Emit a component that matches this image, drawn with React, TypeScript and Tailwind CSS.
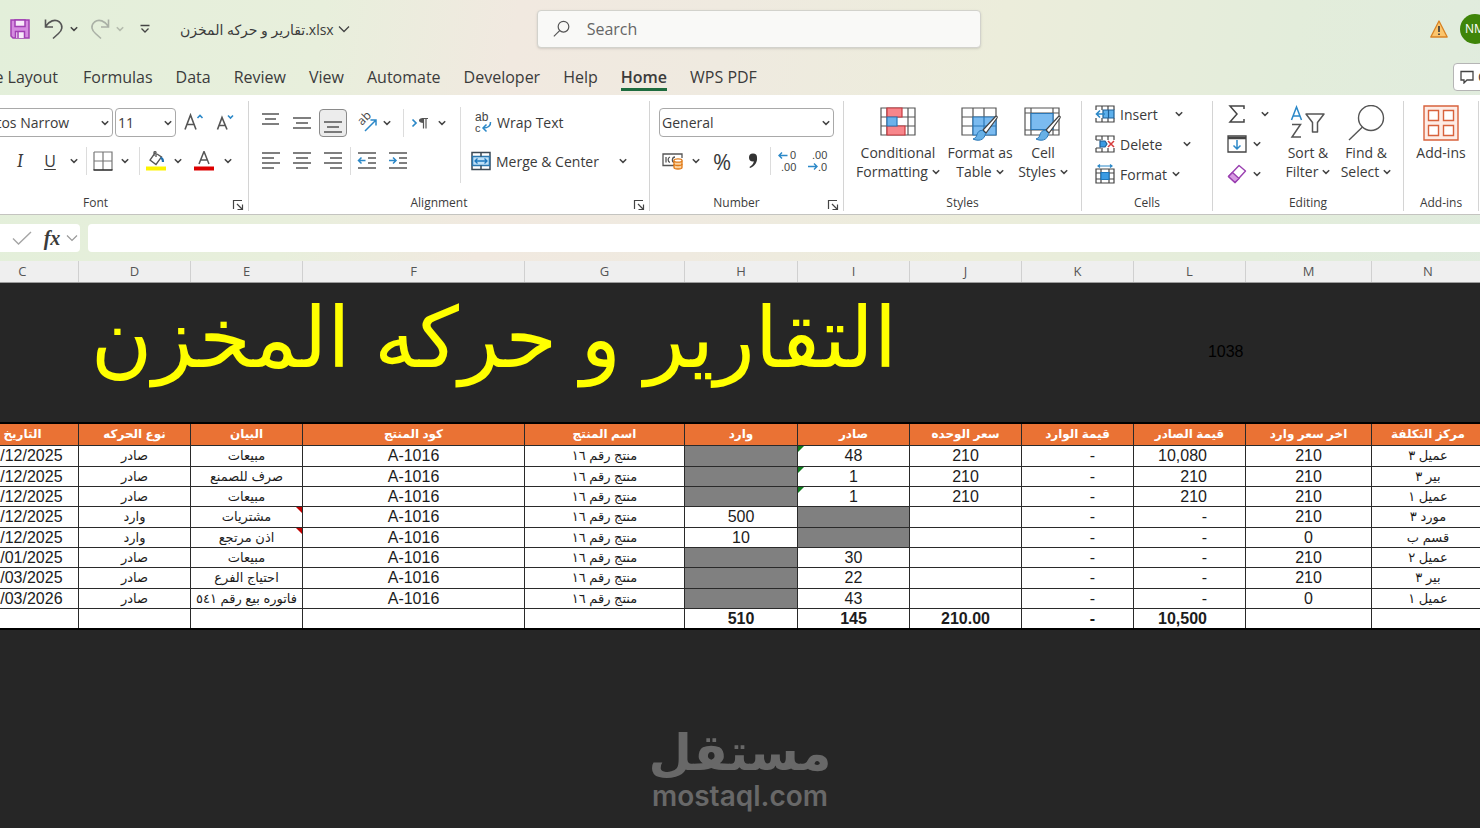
import type { ReactNode } from "react";
import clsx from "clsx";

const tabs = ["Formulas", "Data", "Review", "View", "Automate", "Developer", "Help", "Home", "WPS PDF"];

const letters = ["C", "D", "E", "F", "G", "H", "I", "J", "K", "L", "M", "N"];

const headers = [
  "التاريخ",
  "نوع الحركه",
  "البيان",
  "كود المنتج",
  "اسم المنتج",
  "وارد",
  "صادر",
  "سعر الوحده",
  "قيمة الوارد",
  "قيمة الصادر",
  "اخر سعر وارد",
  "مركز التكلفة",
];

type Row = {
  date: string;
  type: string;
  note: string;
  qtyIn?: string;
  qtyOut?: string;
  price?: string;
  valueOut: string;
  last: string;
  center: string;
  comment?: boolean;
  warn?: boolean;
};

const rows: Row[] = [
  { date: "07/12/2025", type: "صادر", note: "مبيعات", qtyOut: "48", price: "210", valueOut: "10,080", last: "210", center: "عميل ٣", warn: true },
  { date: "08/12/2025", type: "صادر", note: "صرف للصمنع", qtyOut: "1", price: "210", valueOut: "210", last: "210", center: "بير ٣", warn: true },
  { date: "08/12/2025", type: "صادر", note: "مبيعات", qtyOut: "1", price: "210", valueOut: "210", last: "210", center: "عميل ١", warn: true },
  { date: "07/12/2025", type: "وارد", note: "مشتريات", qtyIn: "500", valueOut: "-", last: "210", center: "مورد ٣", comment: true },
  { date: "08/12/2025", type: "وارد", note: "اذن مرتجع", qtyIn: "10", valueOut: "-", last: "0", center: "قسم ب", comment: true },
  { date: "07/01/2025", type: "صادر", note: "مبيعات", qtyOut: "30", valueOut: "-", last: "210", center: "عميل ٢" },
  { date: "08/03/2025", type: "صادر", note: "احتياج الفرع", qtyOut: "22", valueOut: "-", last: "210", center: "بير ٣" },
  { date: "07/03/2026", type: "صادر", note: "فاتوره بيع رقم ٥٤١", qtyOut: "43", valueOut: "-", last: "0", center: "عميل ١" },
];

function Chevron({ className }: { className?: string }) {
  return (
    <svg viewBox="0 0 8 6" className={clsx("h-1.5 w-2 shrink-0", className)} fill="none" stroke="#444" strokeWidth="1.5">
      <path d="M0.8 1.2 4 4.4 7.2 1.2" />
    </svg>
  );
}

function ChevronButton({ label, className }: { label: string; className?: string }) {
  return (
    <button aria-label={label} className={clsx("flex h-7 w-3 shrink-0 items-center justify-center", className)}>
      <Chevron />
    </button>
  );
}

function IconButton({ label, className, children }: { label: string; className?: string; children: ReactNode }) {
  return (
    <button aria-label={label} className={clsx("flex h-7 shrink-0 items-center justify-center", className)}>
      {children}
    </button>
  );
}

function Divider({ className }: { className?: string }) {
  return <div className={clsx("w-px shrink-0 bg-[#dcdcdc]", className)} />;
}

function Group({ title, className, launcher, children }: { title: string; className: string; launcher?: boolean; children: ReactNode }) {
  return (
    <section className={clsx("relative flex shrink-0 flex-col border-r border-[#d4d4d4]", className)}>
      <div className="flex h-[94px] w-full">{children}</div>
      <div className="flex h-4 items-center justify-center text-[12px] leading-4">{title}</div>
      {launcher && (
        <button aria-label={title + " settings"} className="absolute right-1 bottom-0 h-3 w-3">
          <svg viewBox="0 0 12 12" fill="none" stroke="#444" strokeWidth="1.2">
            <path d="M1.5 10V1.5H10M5 5l5 5M10.5 5.5v5h-5" />
          </svg>
        </button>
      )}
    </section>
  );
}

// text lines, each given as [x1, x2]
function Lines({ items, top = 2 }: { items: [number, number][]; top?: number }) {
  return (
    <svg viewBox="0 0 20 20" className="h-5 w-5" stroke="#555" strokeWidth="1.5">
      {items.map(([a, b], i) => (
        <path key={i} d={`M${a} ${top + i * 5}H${b}`} />
      ))}
    </svg>
  );
}

function Indent({ right }: { right?: boolean }) {
  return (
    <svg viewBox="0 0 20 20" className="h-5 w-5" fill="none" stroke="#555" strokeWidth="1.5">
      <path d="M1 2H19M11 7H19M11 12H19M1 17H19" />
      <path d={right ? "M1 9.5H8M5 6.5l3 3-3 3" : "M8.5 9.5H1.5M4.5 6.5l-3 3 3 3"} stroke="#2b88c8" />
    </svg>
  );
}

function BigButton({ className, lines, menu, children }: { className: string; lines: string[]; menu?: boolean; children: ReactNode }) {
  return (
    <button className={clsx("flex shrink-0 flex-col items-center leading-[19px]", className)}>
      <span className="flex h-[38px] items-start">{children}</span>
      {lines.map((line, i) => (
        <span key={line} className="flex items-center gap-1 whitespace-nowrap">
          {line}
          {menu && i === lines.length - 1 && <Chevron />}
        </span>
      ))}
    </button>
  );
}

function Brush() {
  return (
    <g>
      <path d="M34.5 9.5 22 23l3 3L36 11c.8-1.200-.5-2.500-1.500-1.500Z" fill="#fff" stroke="#444" strokeWidth="1.2" />
      <path d="M21.5 23.5c-4-.5-5 2.500-6 5.500-.5 1.500-2 2.500-3.500 3 5 2.500 11.500 1.500 12.500-5.500Z" fill="#67b0e6" stroke="#2b78b8" strokeWidth="1" />
    </g>
  );
}

function CellsIcon({ kind }: { kind: "insert" | "delete" | "format" }) {
  return (
    <svg viewBox="0 0 20 20" className="h-5 w-5 shrink-0" fill="none" stroke="#444" strokeWidth="1.2">
      {kind === "format" ? (
        <>
          <path d="M1 5H19V19H1ZM6 5V19M14 5V19M1 9H19M1 15H19" />
          <path d="M6 8.5H14V15.5H6Z" fill="#3b9be3" stroke="#1e78bd" />
          <path d="M3 2H17M5 .5 3 2l2 1.500M15 .5 17 2l-2 1.500" stroke="#2b88c8" />
        </>
      ) : (
        <>
          <path d="M1 6V2H19V6M1 14V18H19V14M7 2V6M13 2V6M7 14V18M13 14V18" />
          {kind === "insert" ? (
            <>
              <path d="M8 6H19V14H8Z" fill="#5db0ec" stroke="#1e5f95" />
              <path d="M13.5 6V14" stroke="#1e5f95" />
              <path d="M10 10H1.5M5 6.5 1.5 10 5 13.5" stroke="#2b88c8" strokeWidth="1.6" />
            </>
          ) : (
            <>
              <path d="M1 6H6M1 14H6" />
              <path d="M5 7H10L12 10 10 13H5Z" fill="#3b9be3" stroke="#1e5f95" />
              <path d="m13 7 6 6M19 7l-6 6" stroke="#d63b3b" strokeWidth="1.5" />
            </>
          )}
        </>
      )}
    </svg>
  );
}

function TitleBar() {
  return (
    <header className="flex h-[58px] items-center">
      <div className="flex w-[36.3%] shrink-0 items-center pl-2.5">
        <button aria-label="Save" className="shrink-0">
          <svg viewBox="0 0 20 20" className="h-5 w-5" fill="#d58be0" stroke="#a13fb3" strokeWidth="1.5">
            <path d="M1 1H19V19H3L1 17Z" />
            <path d="M5 1H15V7.5H5ZM5.5 19V12.5H14.5V19" fill="#f7e9f9" />
            <path d="M8 13V19" />
          </svg>
        </button>
        <button aria-label="Undo" className="ml-3.5">
          <svg viewBox="0 0 20 22" className="h-[22px] w-5" fill="none" stroke="#555" strokeWidth="1.6">
            <path d="M1.5 1.5V9H9M1.5 8.5C5 3 11 .5 15.5 4c4 4 2.500 8.500-1 11.500L9 20.5" />
          </svg>
        </button>
        <ChevronButton label="Undo history" className="ml-1" />
        <button aria-label="Redo" className="ml-2.5">
          <svg viewBox="0 0 20 22" className="h-[22px] w-5" fill="none" stroke="#aab0a6" strokeWidth="1.6">
            <path d="M18.5 1.5V9H11M18.5 8.5C15 3 9 .5 4.5 4 0 8 2 12.500 5.500 15.500L11 20.5" />
          </svg>
        </button>
        <ChevronButton label="Redo history" className="ml-1 opacity-30" />
        <button aria-label="Customize toolbar" className="ml-3.5">
          <svg viewBox="0 0 10 10" className="h-2.5 w-2.5" fill="none" stroke="#444" strokeWidth="1.3">
            <path d="M0.5 1.5H9.5M1.5 4.5 5 8 8.5 4.5" />
          </svg>
        </button>
        <button className="ml-[30px] flex items-center gap-1 text-[14px] whitespace-nowrap">
          <span dir="ltr">تقارير و حركه المخزن.xlsx</span>
          <svg viewBox="0 0 12 8" className="h-2 w-3" fill="none" stroke="#444" strokeWidth="1.3">
            <path d="M1 1.5 6 6.5 11 1.5" />
          </svg>
        </button>
      </div>
      <label className="flex h-[38px] w-[30%] items-center rounded-[4px] border border-[#d2d2cc] bg-[#f9f9f7] pl-3.5 shadow-sm">
        <svg viewBox="0 0 20 20" className="h-5 w-5" fill="none" stroke="#555" strokeWidth="1.3">
          <circle cx="12.5" cy="7.5" r="5.8" />
          <path d="M8.3 11.7 2 18" />
        </svg>
        <input
          aria-label="Search"
          placeholder="Search"
          className="ml-4 w-full bg-transparent text-[16px] outline-none placeholder:text-[#666]"
        />
      </label>
      <div className="ml-auto flex items-center gap-3">
        <svg viewBox="0 0 18 18" className="h-[18px] w-[18px]" fill="#fbc56d" stroke="#d98324" strokeWidth="1.3" strokeLinejoin="round">
          <path d="M9 1 17.2 17H.8Z" />
          <path d="M9 6V12M9 13.5V15" stroke="#3c3c3c" strokeWidth="1.7" />
        </svg>
        <button className="-mr-2.5 h-[30px] w-[30px] rounded-full bg-[#3f8509] text-[12px] text-white">NM</button>
      </div>
    </header>
  );
}

function TabBar() {
  return (
    <nav className="flex h-[37px] items-center gap-[23px] text-[16px]">
      <a href="#layout" className="mr-0.5 flex w-[58px] shrink-0 justify-end whitespace-nowrap">
        Page Layout
      </a>
      {tabs.map((tab) => (
        <a
          key={tab}
          href={"#" + tab}
          className={clsx(
            "flex h-7 items-center border-y-[3px] border-transparent whitespace-nowrap",
            tab === "Home" && "border-b-[#1d6b3e] font-semibold"
          )}
        >
          {tab}
        </a>
      ))}
      <button className="-mr-20 ml-auto flex h-7 w-[107px] items-center gap-1 rounded-[4px] border border-[#b5b5b5] bg-white pl-1.5 text-[14px]">
        <svg viewBox="0 0 14 14" className="h-3.5 w-3.5 shrink-0" fill="none" stroke="#444" strokeWidth="1.3">
          <path d="M1 1.5H13V10H7L4 13V10H1Z" />
        </svg>
        Comments
      </button>
    </nav>
  );
}

function FontGroup() {
  return (
    <Group title="Font" className="w-[249px] pr-[57px]" launcher>
      <div className="flex flex-col gap-2.5 pt-[7px]">
        <div className="flex items-center">
          <div className="relative -ml-6 shrink-0">
            <select aria-label="Font name" className="h-[29px] w-[137px] appearance-none rounded-[4px] border border-[#a9a9a9] bg-white pl-0.5 text-[14px]">
              <option>Aptos Narrow</option>
            </select>
            <Chevron className="absolute top-3 right-1" />
          </div>
          <div className="relative ml-0.5 shrink-0">
            <select aria-label="Font size" className="h-[29px] w-[61px] appearance-none rounded-[4px] border border-[#a9a9a9] bg-white pl-0.5 text-[14px]">
              <option>11</option>
            </select>
            <Chevron className="absolute top-3 right-1" />
          </div>
          <IconButton label="Increase font size" className="ml-2 w-5">
            <svg viewBox="0 0 20 20" className="h-5 w-5" fill="none" stroke="#555" strokeWidth="1.6">
              <path d="M1 16.500 6.500 2l5.500 14.500M3 11.500H10" />
              <path d="M13.500 5 16 2.500 18.500 5" stroke="#2b88c8" />
            </svg>
          </IconButton>
          <IconButton label="Decrease font size" className="ml-3 w-5">
            <svg viewBox="0 0 20 20" className="h-5 w-5" fill="none" stroke="#555" strokeWidth="1.6">
              <path d="M1.500 16.500 6 4.500l5 12M3 12.500H9.500" />
              <path d="M12 2.500 14.500 5 17 2.500" stroke="#2b88c8" />
            </svg>
          </IconButton>
        </div>
        <div className="flex items-center">
          <IconButton label="Italic" className="ml-2.5 w-5 font-serif text-[18px] italic">
            I
          </IconButton>
          <IconButton label="Underline" className="ml-2.5 w-5 text-[16px] underline underline-offset-2">
            U
          </IconButton>
          <ChevronButton label="Underline style" className="ml-2" />
          <Divider className="ml-1.5 h-7" />
          <IconButton label="Borders" className="ml-1.5 w-5">
            <svg viewBox="0 0 20 20" className="h-5 w-5" fill="none" stroke="#777" strokeWidth="1.2">
              <path d="M1 1H19V19M1 1V19M10 1V19M1 10H19" />
              <path d="M0.5 19H19.5" stroke="#333" strokeWidth="1.6" />
            </svg>
          </IconButton>
          <ChevronButton label="Border style" className="ml-1.5" />
          <Divider className="ml-2 h-7" />
          <IconButton label="Fill color" className="ml-1.5 w-5">
            <svg viewBox="0 0 20 20" className="h-5 w-5" fill="none" stroke="#555" strokeWidth="1.3">
              <path d="M9 2 4 9l6 4.500L15.500 6 11 3M8 5V1.500c0-1 2-1 2 0V6" />
              <path d="M14.500 7c2 0 2.500 2 2.500 4" stroke="#1f6fae" strokeWidth="2.2" />
              <path d="M0 17.5H20" stroke="#fdf300" strokeWidth="4" />
            </svg>
          </IconButton>
          <ChevronButton label="Fill colors" className="ml-1.5" />
          <IconButton label="Font color" className="ml-2.5 w-5">
            <svg viewBox="0 0 20 20" className="h-5 w-5" fill="none" stroke="#555" strokeWidth="1.5">
              <path d="M5 13 10 .5 15 13M7 9H13" />
              <path d="M0 17.5H20" stroke="#dc0000" strokeWidth="4" />
            </svg>
          </IconButton>
          <ChevronButton label="Font colors" className="ml-2" />
        </div>
      </div>
    </Group>
  );
}

function AlignmentGroup() {
  return (
    <Group title="Alignment" className="w-[401px] pr-5" launcher>
      <div className="flex w-[211px] shrink-0 flex-col gap-2.5 pt-[7px] pl-2">
        <div className="flex h-[29px] items-center">
          <IconButton label="Top align" className="w-7">
            <Lines top={1} items={[[1, 18], [4, 15], [1, 18]]} />
          </IconButton>
          <IconButton label="Middle align" className="ml-[3px] w-7">
            <Lines top={5} items={[[1, 19], [4, 16], [1, 19]]} />
          </IconButton>
          <IconButton label="Bottom align" className="ml-[3px] w-7 rounded-[4px] border border-[#8a8a8a] bg-[#ececec]">
            <Lines top={9} items={[[1, 19], [4, 16], [1, 19]]} />
          </IconButton>
          <IconButton label="Orientation" className="ml-1.5 w-7">
            <svg viewBox="0 0 22 22" className="h-[22px] w-[22px]">
              <text x="0" y="0" transform="translate(6 14) rotate(-45)" fontSize="12" fill="#444">ab</text>
              <path d="M9 19 20 8M14.5 8H20V13.5" fill="none" stroke="#2b88c8" strokeWidth="1.5" />
            </svg>
          </IconButton>
          <ChevronButton label="Orientation options" />
          <Divider className="ml-2.5 h-7" />
          <IconButton label="Text direction" className="ml-0.5 w-7">
            <svg viewBox="0 0 18 14" className="h-3.5 w-[18px]" fill="none" stroke="#2b88c8" strokeWidth="1.7">
              <path d="M1.5 3.5 5 7 1.5 10.5" />
              <path d="M12.5 2.5V12.5M15 2.5V12.5M11 2.5H17" stroke="#555" strokeWidth="1.2" />
              <path d="M12.5 2C9 2 8 3.2 8 4.5S9.5 7 12.5 7Z" fill="#555" stroke="none" />
            </svg>
          </IconButton>
          <ChevronButton label="Text direction options" className="ml-0.5" />
        </div>
        <div className="flex items-center">
          <IconButton label="Align left" className="w-7">
            <Lines items={[[1, 19], [1, 13], [1, 19], [1, 13]]} />
          </IconButton>
          <IconButton label="Center" className="ml-[3px] w-7">
            <Lines items={[[1, 19], [4, 16], [1, 19], [4, 16]]} />
          </IconButton>
          <IconButton label="Align right" className="ml-[3px] w-7">
            <Lines items={[[1, 19], [7, 19], [1, 19], [7, 19]]} />
          </IconButton>
          <Divider className="ml-[3px] h-7" />
          <IconButton label="Decrease indent" className="ml-0.5 w-7">
            <Indent />
          </IconButton>
          <IconButton label="Increase indent" className="ml-[3px] w-7">
            <Indent right />
          </IconButton>
        </div>
      </div>
      <Divider className="mt-1.5 h-[76px]" />
      <div className="flex grow flex-col gap-2.5 pt-[7px] pl-2.5">
        <button className="flex h-[29px] items-center gap-1 text-[14px]">
          <svg viewBox="0 0 22 22" className="h-[22px] w-[22px] font-['Liberation_Sans']">
            <text x="4" y="9" fontSize="12" fill="#444">ab</text>
            <text x="4" y="20" fontSize="11" fill="#444">c</text>
            <path d="M19.5 10c.5 4-3 6-7 6M15.500 12.500 12 16l3.500 3.500" fill="none" stroke="#2b88c8" strokeWidth="1.5" />
          </svg>
          Wrap Text
        </button>
        <div className="flex h-7 items-center">
          <button className="flex items-center gap-[5px] text-[14px]">
            <svg viewBox="0 0 20 20" className="h-5 w-5" fill="none" stroke="#3c4a55" strokeWidth="1.5">
              <path d="M1 1.5H19V18.5H1Z" fill="#fff" />
              <path d="M1.5 5.5H18.5V14.5H1.5Z" fill="#bfe1f8" stroke="#2b78b0" />
              <path d="M10 1.5V5.5M10 14.5V18.5" />
              <path d="M4 10H16M6.5 7.5 4 10l2.500 2.500M13.5 7.5 16 10l-2.500 2.500" stroke="#1e78bd" strokeWidth="1.3" />
            </svg>
            Merge &amp; Center
          </button>
          <ChevronButton label="Merge options" className="ml-auto" />
        </div>
      </div>
    </Group>
  );
}

function NumberGroup() {
  return (
    <Group title="Number" className="w-[194px] pr-5" launcher>
      <div className="flex flex-col gap-2.5 pt-[7px] pl-[9px]">
        <div className="relative w-[175px]">
          <select aria-label="Number format" className="h-[29px] w-full appearance-none rounded-[4px] border border-[#a9a9a9] bg-white pl-0.5 text-[14px]">
            <option>General</option>
          </select>
          <Chevron className="absolute top-3 right-1" />
        </div>
        <div className="flex items-center">
          <IconButton label="Accounting format" className="w-7">
            <svg viewBox="0 0 22 18" className="h-[18px] w-[22px]" fill="none" stroke="#555" strokeWidth="1.3">
              <path d="M12 13.5H1V2H20V6" />
              <path d="M4 5v5.500M8 5C5.5 6 5.5 9.5 8 10.5M13 5C10 5 9.5 9.5 12 10.5" />
              <path d="M12 8.5V15.5c0 2 8 2 8 0V8.5" fill="#fbd3a0" stroke="#e07b1a" />
              <ellipse cx="16" cy="8.5" rx="4" ry="1.7" fill="#fff" stroke="#e07b1a" />
              <path d="M12 12c0 2 8 2 8 0" stroke="#e07b1a" />
            </svg>
          </IconButton>
          <ChevronButton label="Accounting options" className="ml-[3px]" />
          <IconButton label="Percent style" className="ml-1.5 w-7 text-[22px]">%</IconButton>
          <IconButton label="Comma style" className="ml-[3px] w-7">
            <svg viewBox="0 0 10 16" className="h-4 w-2.5">
              <circle cx="5" cy="4.5" r="4" fill="#333" />
              <path d="M9 4.5C9.5 9 7 13 2 15L1.5 14C4.5 12 6 10 6 7Z" fill="#333" />
            </svg>
          </IconButton>
          <Divider className="ml-[3px] h-7" />
          <IconButton label="Increase decimal" className="ml-0.5 w-7">
            <svg viewBox="0 0 20 22" className="h-[22px] w-5 font-['Liberation_Sans']" fill="none">
              <text x="13" y="9" fontSize="11" fill="#444">0</text>
              <text x="4" y="21" fontSize="11" fill="#444">.00</text>
              <path d="M10.5 5.5H2M5 2.5l-3 3 3 3" stroke="#2b88c8" strokeWidth="1.4" />
            </svg>
          </IconButton>
          <IconButton label="Decrease decimal" className="ml-[3px] w-7">
            <svg viewBox="0 0 20 22" className="h-[22px] w-5 font-['Liberation_Sans']" fill="none">
              <text x="4" y="9" fontSize="11" fill="#444">.00</text>
              <text x="10" y="21" fontSize="11" fill="#444">.0</text>
              <path d="M0 16.5H9M6 13.5l3 3-3 3" stroke="#2b88c8" strokeWidth="1.4" />
            </svg>
          </IconButton>
        </div>
      </div>
    </Group>
  );
}

function StylesGroup() {
  return (
    <Group title="Styles" className="w-[238px]">
      <div className="flex items-start pt-1 pl-3 text-[14px]">
        <BigButton className="w-[84px]" lines={["Conditional", "Formatting"]} menu>
          <svg viewBox="0 0 36 30" className="mt-0.5 h-[30px] w-9" fill="none" stroke="#555" strokeWidth="1.2">
            <path d="M1 1H35V28H1ZM7 1V28M28 1V28M1 10H35M1 19H35" />
            <path d="M7 1H22V10H7ZM7 19H25V28H7Z" fill="#f7868b" stroke="#c8393f" />
            <path d="M7 10H17V19H7Z" fill="#6cb2ea" stroke="#2b78b8" />
          </svg>
        </BigButton>
        <BigButton className="ml-1 w-[72px]" lines={["Format as", "Table"]} menu>
          <svg viewBox="0 0 38 36" className="mt-0.5 h-9 w-[38px]" fill="none" stroke="#555" strokeWidth="1.2">
            <path d="M1 1H35V28H1ZM12 1V28M23 1V28M1 10H35M1 19H35" />
            <path d="M12 10H35V28H12Z" fill="#7bbbf0" stroke="#2b78b8" />
            <path d="M12 19H35M23 10V28" stroke="#2b78b8" />
            <Brush />
          </svg>
        </BigButton>
        <BigButton className="w-[54px]" lines={["Cell", "Styles"]} menu>
          <svg viewBox="0 0 38 36" className="mt-0.5 h-9 w-[38px]" fill="none" stroke="#555" strokeWidth="1.2">
            <path d="M1 1H35V28H1ZM7 1V28M29 1V28M1 6H35M1 23H35" />
            <path d="M7 6.5H29V22.5H7Z" fill="#7bbbf0" stroke="#2b78b8" />
            <Brush />
          </svg>
        </BigButton>
      </div>
    </Group>
  );
}

function CellsGroup() {
  return (
    <Group title="Cells" className="w-[131px]">
      <div className="flex flex-col gap-1 pl-[13px] text-[14px]">
        <button className="flex h-[26px] items-center gap-[5px]">
          <CellsIcon kind="insert" />
          Insert
          <Chevron className="ml-3" />
        </button>
        <button className="flex h-[26px] items-center gap-[5px]">
          <CellsIcon kind="delete" />
          Delete
          <Chevron className="ml-4" />
        </button>
        <button className="flex h-[26px] items-center gap-[5px]">
          <CellsIcon kind="format" />
          Format
          <Chevron />
        </button>
      </div>
    </Group>
  );
}

function EditingGroup() {
  return (
    <Group title="Editing" className="w-[191px]">
      <div className="flex flex-col gap-1 pl-3.5">
        <button aria-label="AutoSum" className="flex h-[26px] items-center gap-3.5">
          <svg viewBox="0 0 20 20" className="h-5 w-5" fill="none" stroke="#444" strokeWidth="1.5">
            <path d="M17 5V2H3L10 10 3 18H17V15" />
          </svg>
          <Chevron />
        </button>
        <button aria-label="Fill" className="flex h-[26px] items-center gap-1.5">
          <svg viewBox="0 0 20 18" className="h-[18px] w-5" fill="none" stroke="#444" strokeWidth="1.3">
            <path d="M1 1H19V17H1Z" />
            <path d="M1 3H19" strokeWidth="2.5" />
            <path d="M10 5V14M6.5 10.5 10 14l3.500-3.500" stroke="#2b88c8" strokeWidth="1.5" />
          </svg>
          <Chevron />
        </button>
        <button aria-label="Clear" className="flex h-[26px] items-center gap-1.5">
          <svg viewBox="0 0 20 20" className="h-5 w-5" fill="none" stroke="#9a3fb0" strokeWidth="1.4" strokeLinejoin="round">
            <path d="M12 1.5 18.5 7 8 18.5 1.5 12.5Z" />
            <path d="M5.5 8.5 12 14.5 8 18.5 1.5 12.5Z" fill="#d79be2" />
          </svg>
          <Chevron />
        </button>
      </div>
      <div className="flex items-start gap-1 pt-1 pl-3 text-[14px]">
        <BigButton className="w-[54px]" lines={["Sort &", "Filter"]} menu>
          <svg viewBox="0 0 36 34" className="h-[34px] w-9" fill="none" stroke="#555" strokeWidth="1.5">
            <path d="M1.5 15 6.5 2l5 13M3.3 11H9.7" stroke="#2b88c8" />
            <path d="M2 19.5H10.5L2 32H11" />
            <path d="M16 9H34L27.5 17.5V27H22.5V17.5Z" strokeLinejoin="round" />
          </svg>
        </BigButton>
        <BigButton className="w-[54px]" lines={["Find &", "Select"]} menu>
          <svg viewBox="0 0 38 36" className="h-9 w-[38px]" fill="none" stroke="#555" strokeWidth="1.4">
            <circle cx="24" cy="13" r="12.5" />
            <path d="M15.5 22 2 35" />
          </svg>
        </BigButton>
      </div>
    </Group>
  );
}

function AddinsGroup() {
  return (
    <Group title="Add-ins" className="w-[75px]">
      <div className="flex w-full items-start justify-center pt-1 text-[14px]">
        <BigButton className="w-[60px]" lines={["Add-ins"]}>
          <svg viewBox="0 0 36 36" className="h-9 w-9" fill="#fdece6" stroke="#d8623c" strokeWidth="1.4">
            <path d="M1 1H35V35H1Z" />
            <path d="M5.5 5.5H15.5V15.5H5.5ZM20.5 5.5H30.5V15.5H20.5ZM5.5 20.5H15.5V30.5H5.5ZM20.5 20.5H30.5V30.5H20.5Z" fill="#fff" />
          </svg>
        </BigButton>
      </div>
    </Group>
  );
}

function FormulaBar() {
  return (
    <div className="flex h-[47px] items-center gap-2 border-t border-[#c4c4c0]">
      <div className="flex h-7 w-20 shrink-0 items-center rounded-r-[4px] bg-white">
        <button aria-label="Enter" className="ml-3">
          <svg viewBox="0 0 20 14" className="h-3.5 w-5" fill="none" stroke="#a5a5a5" strokeWidth="1.4">
            <path d="M1 7.5 6.5 13 19 1" />
          </svg>
        </button>
        <button aria-label="Insert function" className="ml-2.5 w-5 font-['Liberation_Serif'] text-[20px] leading-6 font-bold italic">
          fx
        </button>
        <svg viewBox="0 0 12 8" className="ml-1 h-2 w-3" fill="none" stroke="#999" strokeWidth="1.2">
          <path d="M1 1.5 6 6.5 11 1.5" />
        </svg>
      </div>
      <input aria-label="Formula bar" className="h-7 grow rounded-l-[4px] bg-white px-2 outline-none" />
    </div>
  );
}

function Cell({ className, hatched, arabic, children }: { className?: string; hatched?: boolean; arabic?: boolean; children?: ReactNode }) {
  return (
    <td
      dir={arabic ? "rtl" : undefined}
      className={clsx(
        "relative border border-[#2a2a2a] p-0 pt-px text-center whitespace-nowrap",
        arabic && "text-[13px]",
        hatched ? "bg-[repeating-conic-gradient(#5c5c5c_0_25%,#a4a4a4_0_50%)] bg-[length:2px_2px]" : "bg-white",
        className
      )}
    >
      {children}
    </td>
  );
}

function Sheet() {
  return (
    <main className="grow overflow-hidden bg-[#262626]">
      <table className="-ml-[34px] w-[calc(100%+39px)] table-fixed border-collapse font-['Liberation_Sans','DejaVu_Sans',sans-serif] text-[16px] leading-[18px] text-[#1c1c1c]">
        <colgroup>
          <col className="w-28" />
          <col className="w-28" />
          <col className="w-28" />
          <col className="w-[222px]" />
          <col className="w-40" />
          <col className="w-[113px]" />
          <col className="w-28" />
          <col className="w-28" />
          <col className="w-28" />
          <col className="w-28" />
          <col className="w-[126px]" />
          <col />
        </colgroup>
        <thead>
          <tr className="h-[21px] bg-[#efefef] font-['Open_Sans',sans-serif] text-[13px] text-[#555]">
            {letters.map((l) => (
              <th key={l} className="border-r border-b border-r-[#d0d0d0] border-b-[#9c9c9c] p-0 font-normal">
                {l}
              </th>
            ))}
          </tr>
        </thead>
        <tbody>
          <tr className="h-[141px]">
            <td colSpan={8} dir="rtl" className="p-0 pb-7 text-center text-[84px] leading-[100px] whitespace-nowrap text-[#ffff00]">
              التقارير و حركه المخزن
            </td>
            <td />
            <td className="p-0 pr-0.5 text-right text-black">1038</td>
            <td />
            <td />
          </tr>
          <tr className="h-[22px] border-t-2 border-black">
            {headers.map((h) => (
              <th key={h} dir="rtl" className="border border-[#2a2a2a] bg-[#ea7234] p-0 text-[12px] whitespace-nowrap text-white">
                {h}
              </th>
            ))}
          </tr>
          {rows.map((r, i) => (
            <tr key={i} className={i % 3 === 0 ? "h-[21px]" : "h-5"}>
              <Cell>{r.date}</Cell>
              <Cell arabic>{r.type}</Cell>
              <Cell arabic>
                {r.note}
                {r.comment && <i className="absolute top-0 right-0 border-t-[6px] border-l-[6px] border-t-[#c00000] border-l-transparent" />}
              </Cell>
              <Cell>A-1016</Cell>
              <Cell arabic>منتج رقم ١٦</Cell>
              <Cell hatched={!r.qtyIn}>{r.qtyIn}</Cell>
              <Cell hatched={!r.qtyOut}>
                {r.qtyOut}
                {r.warn && <i className="absolute top-0 left-0 border-t-[6px] border-r-[6px] border-t-[#0f7b1e] border-r-transparent" />}
              </Cell>
              <Cell>{r.price}</Cell>
              <Cell className="pr-[38px] text-right">-</Cell>
              <Cell className="pr-[38px] text-right">{r.valueOut}</Cell>
              <Cell>{r.last}</Cell>
              <Cell arabic>{r.center}</Cell>
            </tr>
          ))}
          <tr className="h-5 border-b-2 border-black font-bold">
            <Cell />
            <Cell />
            <Cell />
            <Cell />
            <Cell />
            <Cell>510</Cell>
            <Cell>145</Cell>
            <Cell>210.00</Cell>
            <Cell className="pr-[38px] text-right">-</Cell>
            <Cell className="pr-[38px] text-right">10,500</Cell>
            <Cell />
            <Cell />
          </tr>
        </tbody>
      </table>
      <div className="mt-24 flex flex-col items-center text-[#686868]">
        <div dir="rtl" className="font-['DejaVu_Sans',sans-serif] text-[50px] leading-[54px] font-bold">مستقل</div>
        <div className="font-['Inter',sans-serif] text-[28px] leading-8 font-semibold">mostaql.com</div>
      </div>
    </main>
  );
}

export default function App() {
  return (
    <div className="flex min-h-screen flex-col overflow-hidden bg-[linear-gradient(100deg,#e3efda_0%,#e8efdc_20%,#f1e9e0_32%,#efeae0_45%,#eceddb_62%,#e3eddb_80%,#dfebdf_100%)] font-['Open_Sans','DejaVu_Sans',sans-serif] text-[#3b3b3b]">
      <TitleBar />
      <TabBar />
      <div className="flex h-[119px] overflow-hidden bg-white pt-1.5 pb-[3px]">
        <FontGroup />
        <AlignmentGroup />
        <NumberGroup />
        <StylesGroup />
        <CellsGroup />
        <EditingGroup />
        <AddinsGroup />
      </div>
      <FormulaBar />
      <Sheet />
    </div>
  );
}
